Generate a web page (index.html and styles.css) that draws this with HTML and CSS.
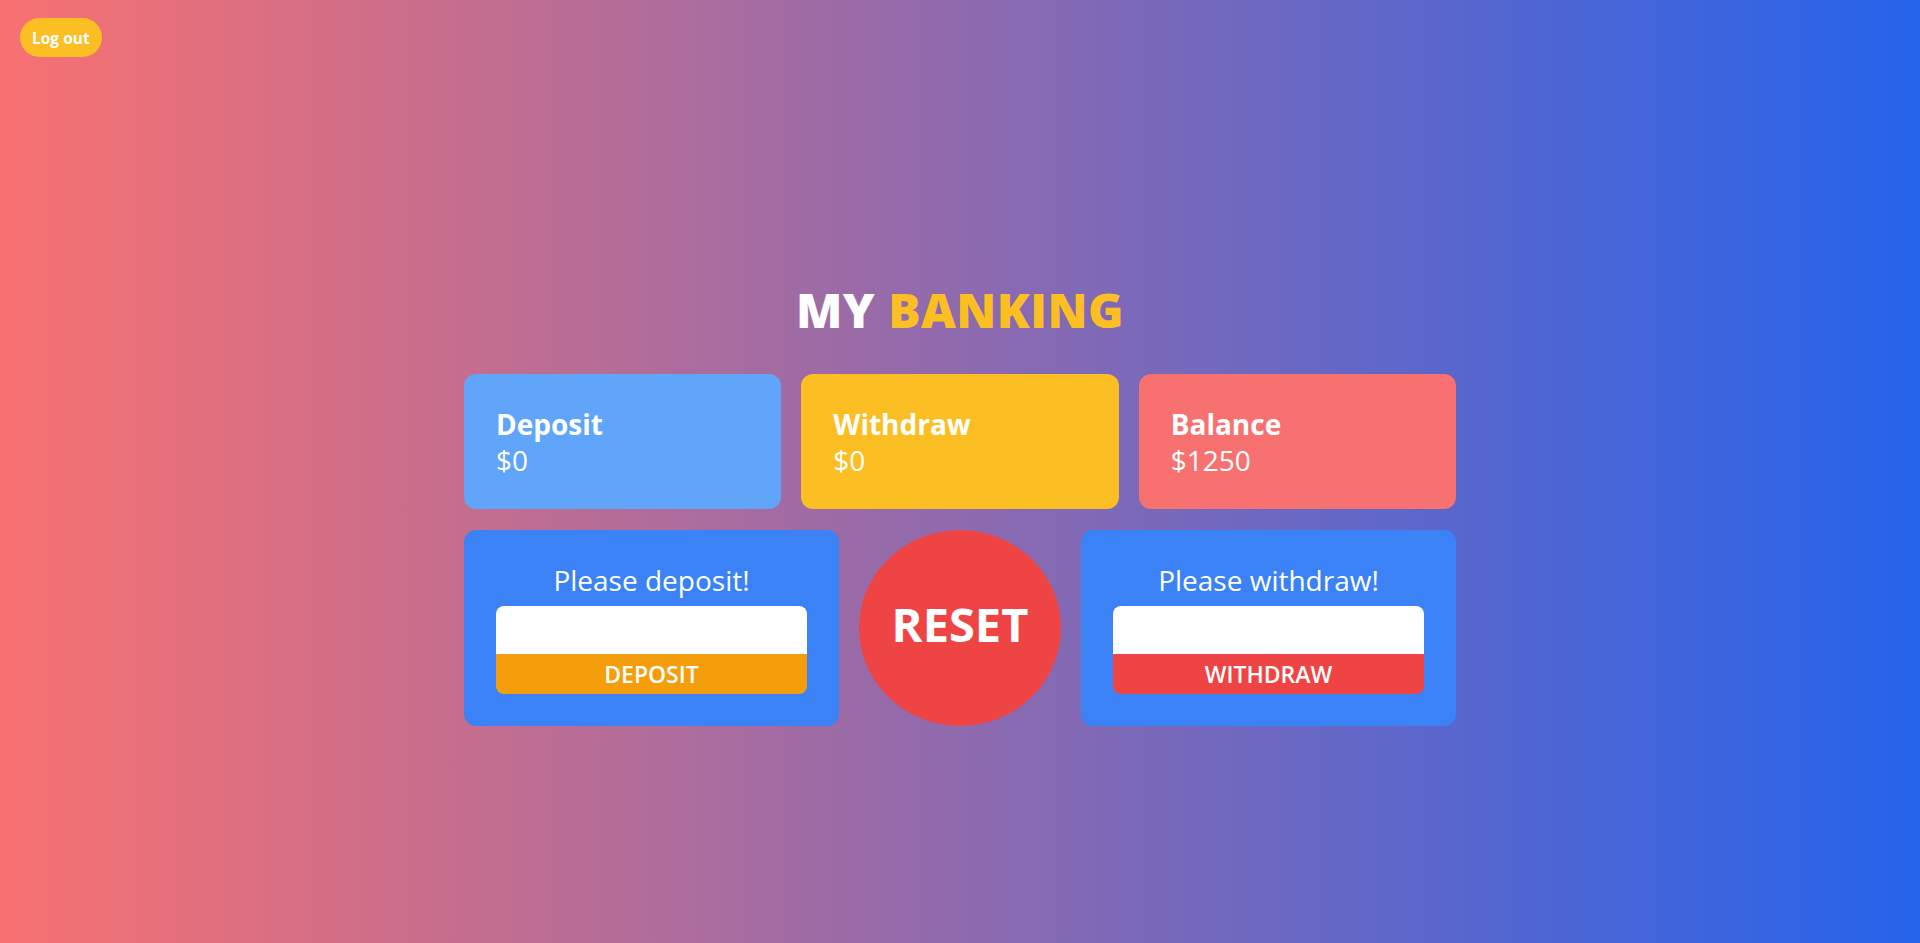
FILE: index.html
```html
<!DOCTYPE html>
<html lang="en">
<head>
<meta charset="utf-8">
<title>My Banking</title>
<link rel="stylesheet" href="styles.css">
</head>
<body>
<div class="page">
  <header class="topbar">
    <button class="logout">Log out</button>
  </header>
  <main class="main">
    <div class="bank">
      <h1 class="title">MY <span class="accent">BANKING</span></h1>
      <div class="stats">
        <div class="stat stat-deposit">
          <div class="stat-label">Deposit</div>
          <div class="stat-value">$0</div>
        </div>
        <div class="stat stat-withdraw">
          <div class="stat-label">Withdraw</div>
          <div class="stat-value">$0</div>
        </div>
        <div class="stat stat-balance">
          <div class="stat-label">Balance</div>
          <div class="stat-value">$1250</div>
        </div>
      </div>
      <div class="actions">
        <div class="panel">
          <div class="panel-title">Please deposit!</div>
          <div class="form">
            <input class="amount" type="text">
            <button class="submit submit-deposit">DEPOSIT</button>
          </div>
        </div>
        <button class="reset">RESET</button>
        <div class="panel">
          <div class="panel-title">Please withdraw!</div>
          <div class="form">
            <input class="amount" type="text">
            <button class="submit submit-withdraw">WITHDRAW</button>
          </div>
        </div>
      </div>
    </div>
  </main>
</div>
</body>
</html>
```

FILE: styles.css
```css
* { box-sizing: border-box; }
html, body { margin: 0; padding: 0; }
body {
  font-family: "Open Sans", "Noto Sans", "Liberation Sans", sans-serif;
  color: #fff;
  background: linear-gradient(to right, #f87171, #2563eb);
  min-height: 100vh;
}
.page {
  min-height: 100vh;
  display: flex;
  flex-direction: column;
}
.topbar {
  padding: 18px 20px 0;
  height: 75px;
}
.logout {
  font-family: inherit;
  font-size: 15.5px;
  font-weight: 700;
  color: #fff;
  background: #fbbf24;
  border: 0;
  border-radius: 9999px;
  height: 39px;
  padding: 0 12px;
  cursor: pointer;
}
.main {
  flex: 1;
  display: flex;
  align-items: flex-start;
  justify-content: center;
  padding-top: 211px;
}
.bank {
  width: 992px;
  display: flex;
  flex-direction: column;
}
.title {
  margin: 0 0 40px;
  text-align: center;
  font-size: 48px;
  line-height: 48px;
  font-weight: 800;
  letter-spacing: 0.5px;
}
.accent { color: #fbbf24; }
.stats {
  display: grid;
  grid-template-columns: repeat(3, 1fr);
  gap: 20px;
}
.stat {
  border-radius: 12px;
  padding: 32px 32px;
  height: 135px;
}
.stat-deposit { background: #60a5fa; }
.stat-withdraw { background: #fbbf24; }
.stat-balance { background: #f87171; }
.stat-label {
  font-size: 28px;
  line-height: 36px;
  font-weight: 700;
}
.stat-value {
  font-size: 28px;
  line-height: 36px;
  font-weight: 400;
}
.actions {
  margin-top: 21px;
  display: grid;
  grid-template-columns: 1fr 202px 1fr;
  gap: 20px;
  height: 196px;
}
.panel {
  background: #3b82f6;
  border-radius: 12px;
  padding: 32px;
  display: flex;
  flex-direction: column;
}
.panel-title {
  text-align: center;
  font-size: 28px;
  line-height: 36px;
  font-weight: 400;
  margin-bottom: 8px;
}
.form {
  display: flex;
  flex-direction: column;
  border-radius: 8px;
  overflow: hidden;
}
.amount {
  height: 48px;
  border: 0;
  background: #fff;
  outline: none;
  font-family: inherit;
  font-size: 20px;
  padding: 0 12px;
  width: 100%;
}
.submit {
  height: 40px;
  border: 0;
  color: #fff;
  font-family: inherit;
  font-size: 23px;
  font-weight: 600;
  cursor: pointer;
}
.submit-deposit { background: #f59e0b; }
.submit-withdraw { background: #ef4444; }
.reset {
  background: #ef4444;
  border: 0;
  border-radius: 50%;
  color: #fff;
  font-family: inherit;
  font-size: 47px;
  font-weight: 700;
  cursor: pointer;
  padding: 0 0 8px;
}
```
